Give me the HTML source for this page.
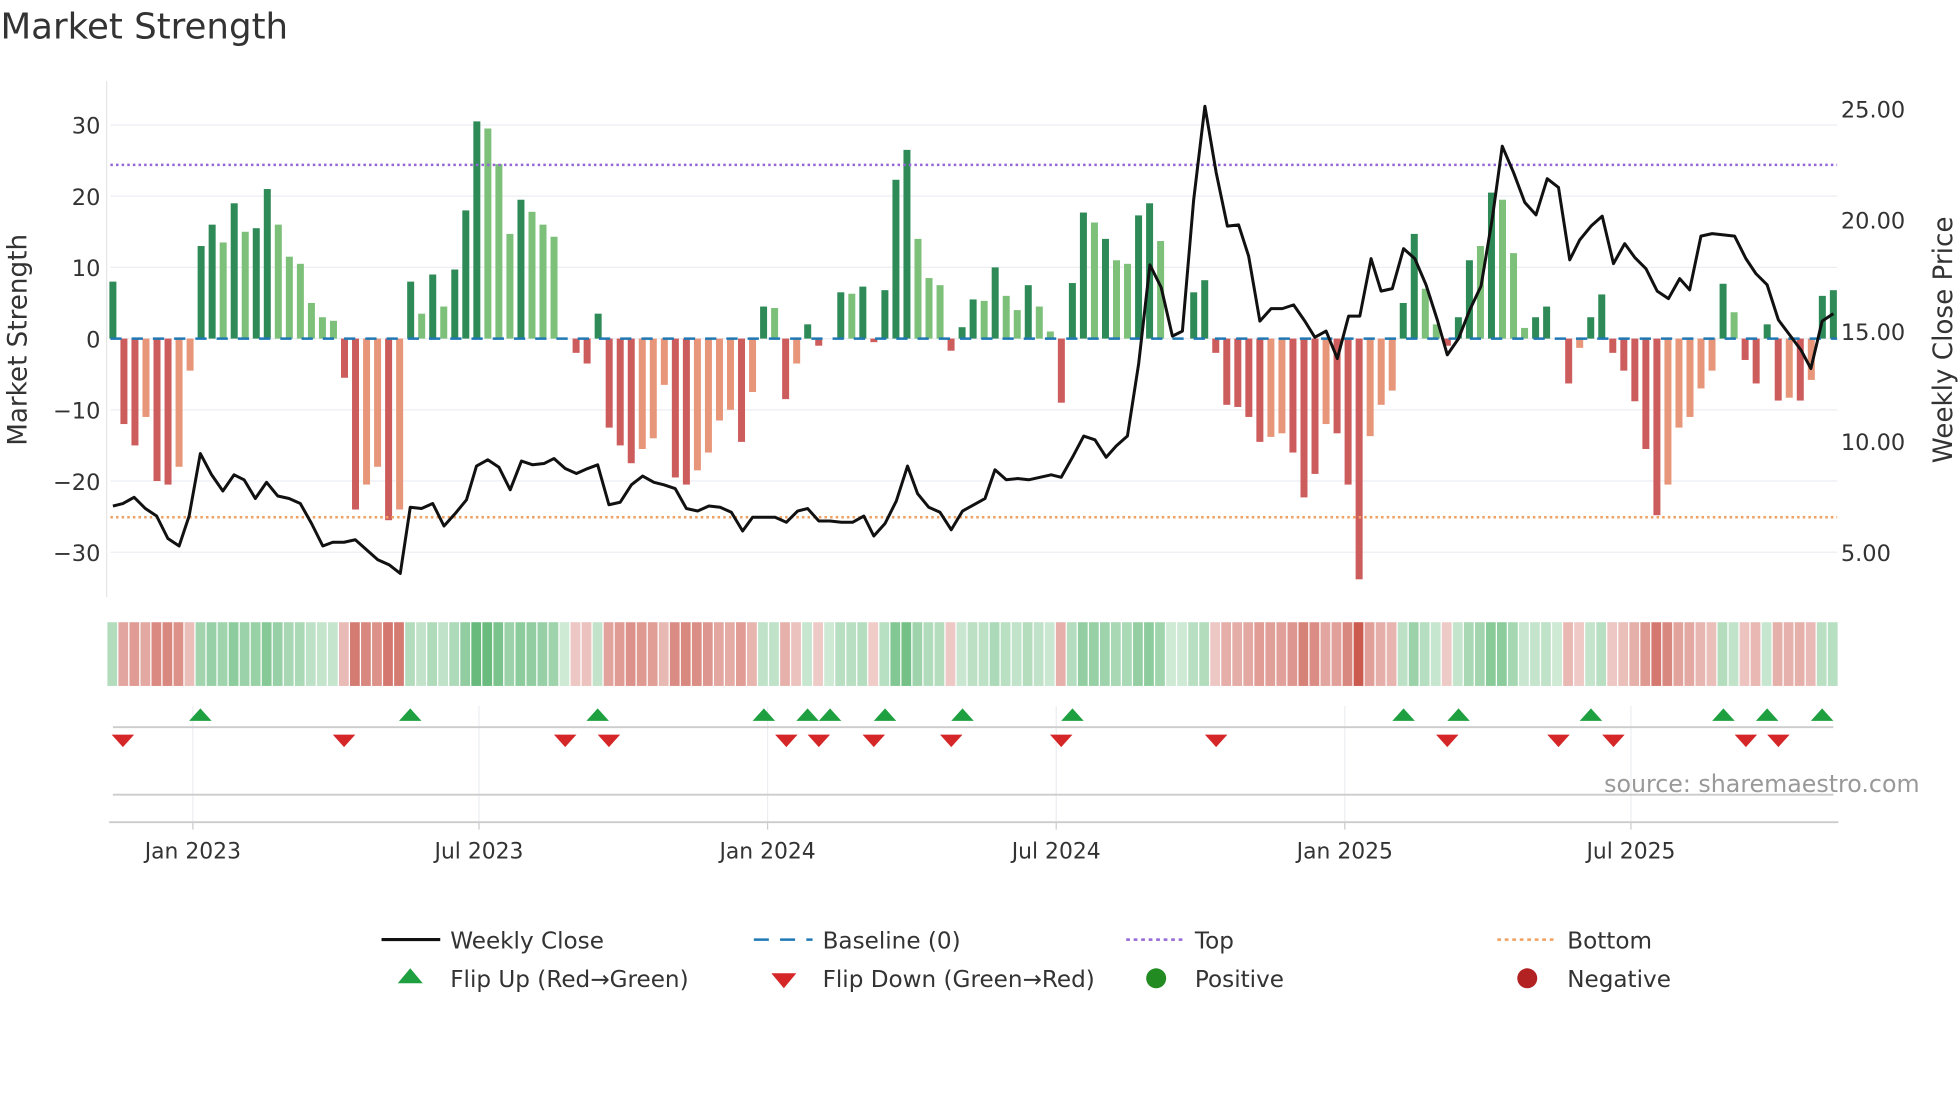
<!DOCTYPE html>
<html><head><meta charset="utf-8"><style>
html,body{margin:0;padding:0;background:#fff;width:1960px;height:1102px;overflow:hidden}
svg{display:block}
text{font-family:"DejaVu Sans","Liberation Sans",sans-serif;fill:#333}
</style></head><body>
<svg id="s" width="1960" height="1102" viewBox="0 0 1568 882" xmlns="http://www.w3.org/2000/svg">
<rect width="1568" height="882" fill="#fff"/>
<text x="0" y="31" font-size="28.5">Market Strength</text>
<g id="grid" stroke="#eceef2" stroke-width="1"></g>
<line x1="85" y1="65" x2="85" y2="478" stroke="#e6e6e6"/>
<g id="bars"></g>
<line x1="88" y1="271" x2="1470" y2="271" stroke="#1f77b4" stroke-width="2" stroke-dasharray="9,8"/>
<line x1="88" y1="132" x2="1470" y2="132" stroke="#9467d8" stroke-width="2" stroke-dasharray="2,2.5"/>
<line x1="88" y1="414" x2="1470" y2="414" stroke="#f0a060" stroke-width="2" stroke-dasharray="2,2.5"/>
<polyline id="pl" fill="none" stroke="#111" stroke-width="2.4" stroke-linejoin="round"/>
<g id="heat"></g>
<g id="mk"></g>
<line x1="90" y1="582" x2="1467" y2="582" stroke="#ccc" stroke-width="1.5"/>
<line x1="90" y1="636" x2="1467" y2="636" stroke="#ccc" stroke-width="1.5"/>
<line x1="87" y1="658" x2="1471" y2="658" stroke="#ccc" stroke-width="1.5"/>
<g font-size="18" text-anchor="end">
<text x="80" y="107">30</text><text x="80" y="164">20</text><text x="80" y="221">10</text><text x="80" y="278">0</text>
<text x="80" y="335">−10</text><text x="80" y="392">−20</text><text x="80" y="449">−30</text>
</g>
<g font-size="18">
<text x="1473" y="94">25.00</text><text x="1473" y="183">20.00</text><text x="1473" y="272">15.00</text>
<text x="1473" y="360">10.00</text><text x="1473" y="449">5.00</text>
</g>
<text font-size="21" transform="translate(21,272) rotate(-90)" text-anchor="middle">Market Strength</text>
<text font-size="21" transform="translate(1562,272) rotate(-90)" text-anchor="middle">Weekly Close Price</text>
<g font-size="17.5" text-anchor="middle">
<text x="154" y="687">Jan 2023</text><text x="383" y="687">Jul 2023</text><text x="614" y="687">Jan 2024</text>
<text x="845" y="687">Jul 2024</text><text x="1076" y="687">Jan 2025</text><text x="1305" y="687">Jul 2025</text>
</g>
<text x="1536" y="634" font-size="19" text-anchor="end" style="fill:#999">source: sharemaestro.com</text>
<g font-size="18.5">
<line x1="305" y1="752" x2="352" y2="752" stroke="#111" stroke-width="2.5"/><text x="360" y="759">Weekly Close</text>
<line x1="603" y1="752" x2="650" y2="752" stroke="#1f77b4" stroke-width="2" stroke-dasharray="12,9"/><text x="658" y="759">Baseline (0)</text>
<line x1="901" y1="752" x2="946" y2="752" stroke="#9467d8" stroke-width="2" stroke-dasharray="3,3"/><text x="956" y="759">Top</text>
<line x1="1198" y1="752" x2="1244" y2="752" stroke="#f0a060" stroke-width="2" stroke-dasharray="3,3"/><text x="1254" y="759">Bottom</text>
<polygon points="328,775 338,787 318,787" fill="#1fa040"/><text x="360" y="790">Flip Up (Red→Green)</text>
<polygon points="617,779 637,779 627,791" fill="#d62728"/><text x="658" y="790">Flip Down (Green→Red)</text>
<circle cx="925" cy="783" r="8" fill="#228b22"/><text x="956" y="790">Positive</text>
<circle cx="1222" cy="783" r="8" fill="#b22222"/><text x="1254" y="790">Negative</text>
</g>
</svg>
<script>
var NS="http://www.w3.org/2000/svg";
function el(p,t,a){var e=document.createElementNS(NS,t);for(var k in a)e.setAttribute(k,a[k]);document.getElementById(p).appendChild(e);return e;}
[30,20,10,0,-10,-20,-30].forEach(function(v){var y=271-v*5.7;el("grid","line",{x1:88,x2:1470,y1:y,y2:y});});
[154,383,614,845,1076,1305].forEach(function(x){el("grid","line",{x1:x,x2:x,y1:565,y2:658});el("grid","line",{x1:x,x2:x,y1:658,y2:664,stroke:"#ccc"});});
var d="8d -12r -15r -11o -20r -20.5r -18o -4.5o 13d 16d 13.5l 19d 15l 15.5d 21d 16l 11.5l 10.5l 5l 3l 2.5l -5.5r -24r -20.5o -18o -25.5r -24o 8d 3.5l 9d 4.5l 9.7d 18d 30.5d 29.5l 24.5l 14.7l 19.5d 17.8l 16l 14.3l 0z -2r -3.5r 3.5d -12.5r -15r -17.5r -15.5o -14o -6.5o -19.5r -20.5r -18.5o -16o -11.5o -10o -14.5r -7.5o 4.5d 4.3l -8.5r -3.5o 2d -1r 0z 6.5d 6.3l 7.3d -0.5r 6.8d 22.3d 26.5d 14l 8.5l 7.5l -1.7r 1.6d 5.5d 5.3l 10d 6l 4l 7.5d 4.5l 1l -9r 7.8d 17.7d 16.3l 14d 11l 10.5l 17.3d 19d 13.7l 0z 0z 6.5d 8.2d -2r -9.3r -9.6r -11r -14.5r -13.8o -13.3o -16r -22.3r -19r -12o -13.3r -20.5r -33.8r -13.7o -9.3o -7.3o 5d 14.7d 7l 2l -1r 3d 11d 13l 20.5d 19.5l 12l 1.5l 3d 4.5d 0z -6.3r -1.3o 3d 6.2d -2r -4.5r -8.8r -15.5r -24.8r -20.5o -12.5o -11o -7o -4.5o 7.7d 3.7l -3r -6.3r 2d -8.7r -8.3o -8.7r -5.8o 6d 6.8d".split(" ");
var col={d:"#2e8b57",l:"#7dc07a",r:"#cd5c5c",o:"#e8967a",z:"#2e8b57"};
var step=(1467-90)/(d.length-1);
d.forEach(function(s,i){var v=parseFloat(s),c=s.slice(-1),x=90+i*step;var h=Math.abs(v)*5.7;
 if(h>0.5)el("bars","rect",{x:x-2.8,y:v>0?271-h:271,width:5.6,height:h,fill:col[c]});
 var a=0.25+0.6*Math.min(Math.abs(v),35)/35;
 el("heat","rect",{x:x-4.4,y:498,width:7.8,height:51,fill:v>=0?"#3aa655":"#c0392b","fill-opacity":v==0?0.25:a});
});
var p="90,405 98,403 107,398 116,407 125,413 134,431 143,437 151,413 160,363 169,380 178,393 187,380 195,384 204,399 213,386 222,397 231,399 240,403 249,419 258,437 266,434 275,434 284,432 293,440 302,448 311,452 320,459 328,406 337,407 346,403 355,421 364,411 373,400 381,373 390,368 399,374 408,392 417,369 426,372 435,371 443,367 452,375 461,379 470,375 478,372 487,404 496,402 505,388 514,381 523,386 531,388 540,391 549,407 558,409 567,405 576,406 585,410 594,425 602,414 611,414 620,414 629,418 638,409 646,407 655,417 664,417 673,418 682,418 691,413 699,429 708,419 717,401 726,373 734,395 743,406 752,410 761,424 770,409 779,404 788,399 796,376 805,384 814,383 823,384 832,382 841,380 849,382 858,366 867,349 876,352 885,366 893,357 902,349 911,291 920,212 929,230 938,269 946,265 955,160 964,85 973,138 982,181 991,180 999,205 1008,257 1017,247 1026,247 1035,244 1044,257 1052,270 1061,265 1070,287 1079,253 1088,253 1097,207 1105,233 1114,231 1123,199 1132,207 1141,228 1150,256 1158,284 1167,271 1176,248 1185,229 1194,175 1202,117 1211,138 1220,162 1229,172 1238,143 1247,150 1256,208 1264,192 1273,181 1282,173 1291,211 1300,195 1308,206 1317,215 1326,233 1335,239 1344,223 1352,232 1361,189 1370,187 1379,188 1388,189 1397,207 1405,219 1414,228 1423,256 1432,268 1441,280 1449,295 1458,257 1467,251";
document.getElementById("pl").setAttribute("points",p);
[160,328,478,611,646,664,708,770,858,1123,1167,1273,1379,1414,1458].forEach(function(x){el("mk","polygon",{points:(x)+",567 "+(x+9)+",577 "+(x-9)+",577",fill:"#1fa040"});});
[98,275,452,487,629,655,699,761,849,973,1158,1247,1291,1397,1423].forEach(function(x){el("mk","polygon",{points:(x-9)+",588 "+(x+9)+",588 "+x+",598",fill:"#d62728"});});
</script>
</body></html>
